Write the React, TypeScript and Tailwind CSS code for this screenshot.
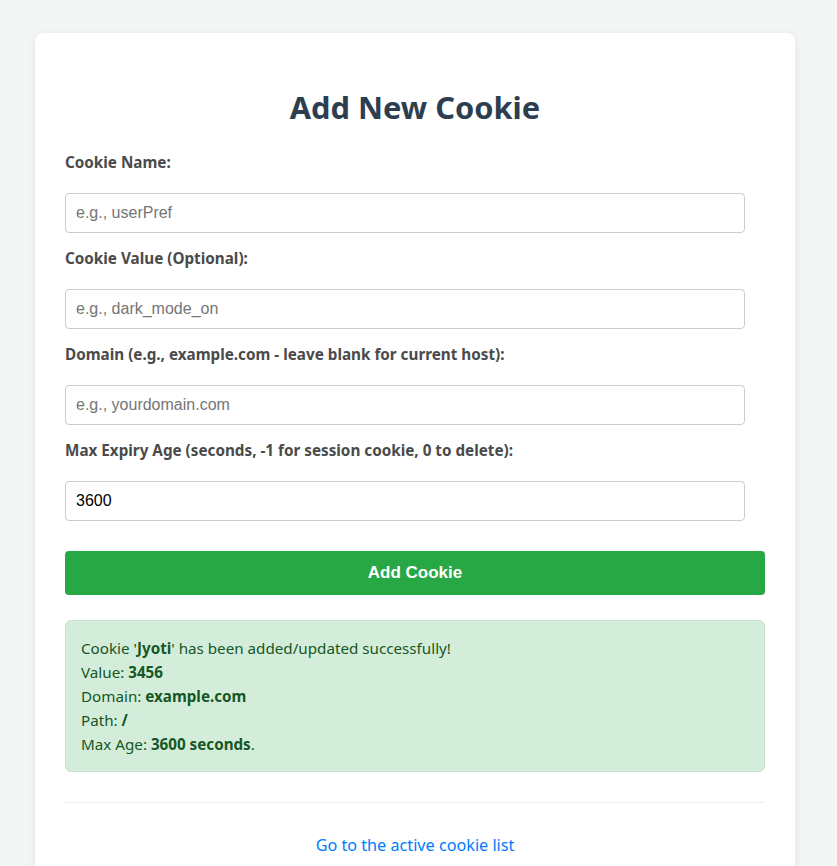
import React from "react";

const labelCls = "block h-[22px] leading-[22px] text-[15.25px] font-bold text-[#4a4a4a]";
const inputCls =
  "block w-[680px] h-[40px] rounded-[4px] border border-[#ccc] bg-white px-[10px] text-[16px] text-black placeholder:text-[#757575] outline-none";

function Field({ label, placeholder, value }: { label: string; placeholder?: string; value?: string }) {
  return (
    <div className="mb-[14px]">
      <label className={labelCls}>{label}</label>
      <input
        className={inputCls + " mt-[20px]"}
        style={{ fontFamily: '"Liberation Sans", Arial, sans-serif' }}
        placeholder={placeholder}
        defaultValue={value}
      />
    </div>
  );
}

export default function App() {
  return (
    <div
      className="min-h-[866px] bg-[#f4f6f5] pt-[33px]"
      style={{ fontFamily: '"Noto Sans", "Open Sans", sans-serif' }}
    >
      <div className="ml-[35px] w-[760px] rounded-[8px] bg-white px-[30px] pt-[30px] pb-[30px] shadow-[0_2px_10px_rgba(0,0,0,0.08)]">
        <h2 className="mb-[20px] mt-[20px] text-center text-[30.8px] font-bold leading-[48px] text-[#2c3e50]">
          Add New Cookie
        </h2>
        <Field label="Cookie Name:" placeholder="e.g., userPref" />
        <Field label="Cookie Value (Optional):" placeholder="e.g., dark_mode_on" />
        <Field label="Domain (e.g., example.com - leave blank for current host):" placeholder="e.g., yourdomain.com" />
        <Field label="Max Expiry Age (seconds, -1 for session cookie, 0 to delete):" value="3600" />
        <button
          className="mt-[30px] block h-[44px] w-[700px] rounded-[4px] bg-[#28a745] text-[17px] font-bold text-white"
          style={{ fontFamily: '"Liberation Sans", Arial, sans-serif' }}
        >
          Add Cookie
        </button>
        <div className="mt-[25px] rounded-[6px] border border-[#c3e6cb] bg-[#d4edda] p-[15px] text-[15.2px] leading-[24px] text-[#155724]">
          <div>
            Cookie '<b>Jyoti</b>' has been added/updated successfully!
          </div>
          <div>
            Value: <b>3456</b>
          </div>
          <div>
            Domain: <b>example.com</b>
          </div>
          <div>
            Path: <b>/</b>
          </div>
          <div>
            Max Age: <b>3600 seconds</b>.
          </div>
        </div>
        <hr className="mt-[30px] border-0 border-t border-[#eee]" />
        <div className="mt-[30px] text-center text-[16.2px] leading-[24px]">
          <a href="#" className="text-[#007bff]">
            Go to the active cookie list
          </a>
        </div>
      </div>
    </div>
  );
}
